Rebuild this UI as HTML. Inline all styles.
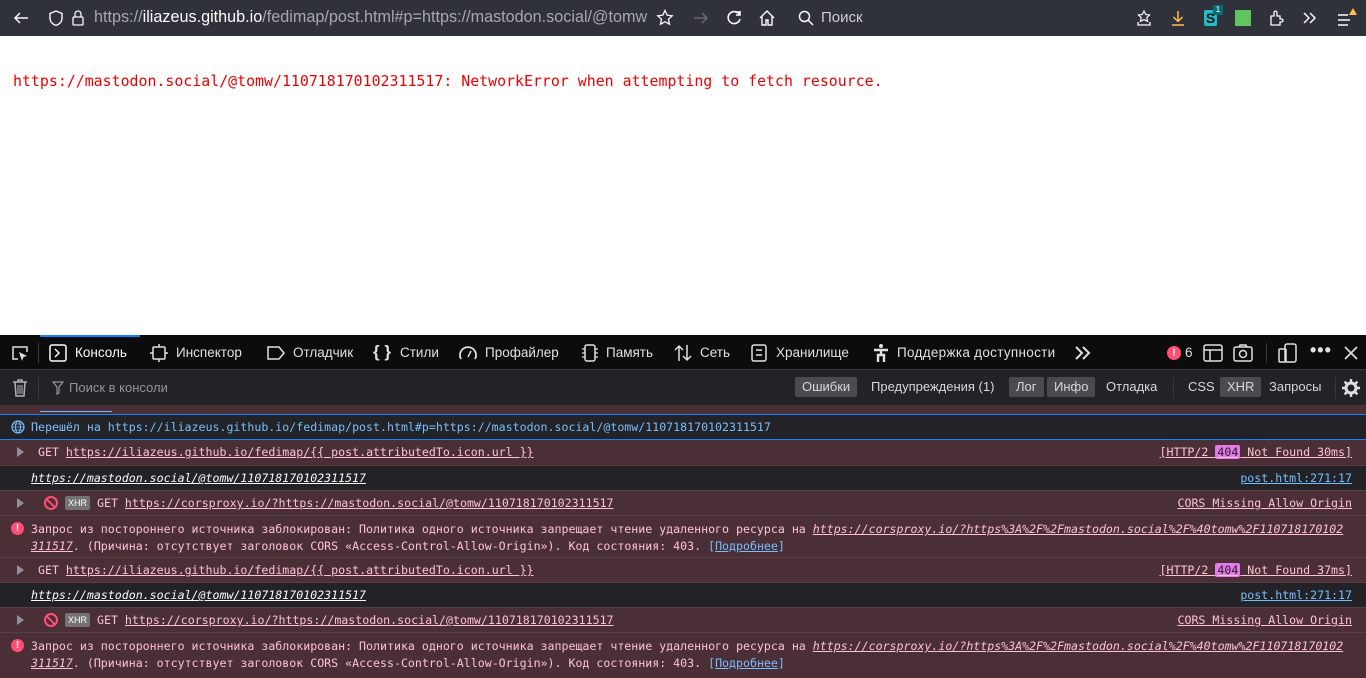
<!DOCTYPE html>
<html><head><meta charset="utf-8"><style>
*{box-sizing:border-box;margin:0;padding:0}
body{width:1366px;height:678px;overflow:hidden;background:#fff;font-family:"Liberation Sans","DejaVu Sans",sans-serif;position:relative}
.abs{position:absolute}
#top{left:0;top:0;width:1366px;height:36px;background:#2f323a;color:#fbfbfe}
#top .t{position:absolute;top:9px;font-size:15px;white-space:nowrap}
#page{left:0;top:36px;width:1366px;height:299px;background:#fff}
#err{left:13px;top:72px;font-family:"DejaVu Sans Mono","Liberation Mono",monospace;font-size:14.9px;color:#e00;white-space:nowrap}
#tabs{left:0;top:335px;width:1366px;height:35px;background:#0c0c0d;border-bottom:1px solid #38383d;color:#fbfbfe;font-size:13.5px}
#tabs .tb{position:absolute;top:10px;white-space:nowrap;color:#e0e0e2}
#filt{left:0;top:370px;width:1366px;height:35px;background:#232327;color:#b1b1b3;font-size:13px}
#filt .b{position:absolute;top:7px;height:20px;line-height:20px;padding:0 7px;border-radius:2px;white-space:nowrap;color:#d7d7db}
#filt .on{background:#4a4a4f}
#cons{left:0;top:405px;width:1366px;height:273px;background:#232327;font-family:"DejaVu Sans Mono","Liberation Mono",monospace;font-size:11.6px;color:#fbfbfe}
.row{position:absolute;left:0;width:1366px;white-space:nowrap}
.er{background:#4b2f36;border-top:1px solid #5c3d44;color:#ffc0d8}
.er a,.u{text-decoration:underline;color:#ffc0d8}
.tx{position:absolute;top:5px}
.r{position:absolute;right:14px;top:5px}
.tri{position:absolute;left:17px;top:7px;width:0;height:0;border-left:7px solid #8f8f9d;border-top:5px solid transparent;border-bottom:5px solid transparent}
.xhr{display:inline-block;background:#737373;color:#fff;font-family:"Liberation Sans",sans-serif;font-size:9px;padding:2px 3px;border-radius:2px;vertical-align:1px}
.blk{position:absolute;left:44px;top:5px;width:14px;height:14px;border:2px solid #ff4f74;border-radius:50%}
.blk:after{content:"";position:absolute;left:4px;top:-1px;width:2px;height:13px;background:#ff4f74;transform:rotate(-45deg)}
.ex{position:absolute;left:11px;top:6px;width:13px;height:13px;border-radius:50%;background:#ff4f74;color:#fff;font:bold 10px "Liberation Sans";text-align:center;line-height:13px}
.b404{background:#e17be8;color:#2a1a2a;padding:0 2px;border-radius:2px}
.blue{color:#75bfff}
</style></head><body>
<div id="top" class="abs">
<svg class="abs" style="left:12px;top:10px" width="18" height="16"><path d="M16 8H3M8 3L3 8l5 5" stroke="#fbfbfe" stroke-width="1.5" fill="none"/></svg>
<svg class="abs" style="left:48px;top:9px" width="16" height="18"><path d="M8 2L2 4.5V9c0 4 3 6.5 6 7.5 3-1 6-3.5 6-7.5V4.5z" stroke="#fbfbfe" stroke-width="1.4" fill="none"/></svg>
<svg class="abs" style="left:71px;top:9px" width="14" height="18"><rect x="2" y="8" width="10" height="8" rx="1" stroke="#fbfbfe" stroke-width="1.3" fill="none"/><path d="M4 8V5a3 3 0 0 1 6 0v3" stroke="#fbfbfe" stroke-width="1.3" fill="none"/></svg>
<div class="t" style="left:94px;color:#a8a8ad;font-size:16.2px;top:8px">https://<span style="color:#fbfbfe">iliazeus.github.io</span>/fedimap/post.html#p=https://mastodon.social/@tomw</div>
<svg class="abs" style="left:656px;top:9px" width="18" height="18"><path d="M9 1.5l2.2 4.7 5 .6-3.7 3.4 1 5L9 12.7 4.5 15.2l1-5L1.8 6.8l5-.6z" stroke="#fbfbfe" stroke-width="1.3" fill="none"/></svg>
<svg class="abs" style="left:692px;top:10px" width="18" height="16"><path d="M2 8h13M10 3l5 5-5 5" stroke="#6b6b70" stroke-width="1.5" fill="none"/></svg>
<svg class="abs" style="left:725px;top:9px" width="18" height="18"><path d="M14 5A6 6 0 1 0 15 10" stroke="#fbfbfe" stroke-width="1.6" fill="none"/><path d="M10 3h5v-1 4h-4" stroke="#fbfbfe" stroke-width="1.6" fill="none"/></svg>
<svg class="abs" style="left:758px;top:9px" width="18" height="18"><path d="M2 9L9 2l7 7M4 7v9h4v-5h2v5h4V7" stroke="#fbfbfe" stroke-width="1.4" fill="none"/></svg>
<svg class="abs" style="left:798px;top:10px" width="16" height="16"><circle cx="6.5" cy="6.5" r="5" stroke="#fbfbfe" stroke-width="1.5" fill="none"/><path d="M10 10l5 5" stroke="#fbfbfe" stroke-width="1.5"/></svg>
<div class="t" style="left:821px;color:#d0d0d4">Поиск</div>
<svg class="abs" style="left:1136px;top:9px" width="16" height="18"><path d="M8 2l1.8 3.5 3.7.5-2.7 2.6.7 3.7L8 10.6 4.5 12.3l.7-3.7L2.5 6l3.7-.5z" stroke="#fbfbfe" stroke-width="1.2" fill="none"/><path d="M2 13v3h12v-3" stroke="#fbfbfe" stroke-width="1.3" fill="none"/></svg>
<svg class="abs" style="left:1170px;top:9px" width="16" height="18"><path d="M8 2v10M3.5 8L8 12.5 12.5 8M2 16h12" stroke="#ffbd4f" stroke-width="1.5" fill="none"/></svg>
<div class="abs" style="left:1204px;top:10px;width:13px;height:16px;background:#1ec0c8;border-radius:2px;color:#0c0c0d;font:bold 14px/16px 'Liberation Sans';text-align:center">S</div>
<div class="abs" style="left:1213px;top:5px;width:10px;height:10px;background:#0b6d73;color:#fff;font:8px/10px 'Liberation Sans';text-align:center">1</div>
<div class="abs" style="left:1235px;top:10px;width:16px;height:16px;background:#5fc55f"></div>
<svg class="abs" style="left:1268px;top:9px" width="16" height="18"><path d="M3 16V7h3V3.5a1.5 1.5 0 0 1 3 0V7h3v3h1.5v0a1.5 1.5 0 0 1 0 3H12v3z" stroke="#fbfbfe" stroke-width="1.3" fill="none"/></svg>
<svg class="abs" style="left:1302px;top:11px" width="16" height="14"><path d="M2 2l5 5-5 5M8 2l5 5-5 5" stroke="#fbfbfe" stroke-width="1.5" fill="none"/></svg>
<svg class="abs" style="left:1336px;top:6px" width="24" height="22"><path d="M2 9h10M2 14h12M2 19h10" stroke="#fbfbfe" stroke-width="1.5"/><path d="M17 2l4 7h-8z" fill="#ffbd4f"/></svg>
</div>
<div id="page" class="abs"></div>
<div id="err" class="abs">https://mastodon.social/@tomw/110718170102311517: NetworkError when attempting to fetch resource.</div>

<div id="tabs" class="abs">
<div class="abs" style="left:40px;top:0;width:100px;height:2px;background:#0a84ff"></div>
<svg class="abs" style="left:10px;top:9px" width="20" height="18"><path d="M8 15H3V3h14v5" stroke="#e0e0e2" stroke-width="1.5" fill="none"/><path d="M9 8l8 4-3.5 1L12 17z" fill="#e0e0e2"/></svg>
<div class="abs" style="left:38px;top:8px;width:1px;height:20px;background:#38383d"></div>
<svg class="abs" style="left:49px;top:9px" width="18" height="18"><rect x="1" y="1" width="16" height="16" rx="2" stroke="#fbfbfe" stroke-width="1.5" fill="none"/><path d="M6 5l4 4-4 4" stroke="#fbfbfe" stroke-width="1.5" fill="none"/></svg>
<div class="tb" style="left:75px;color:#fbfbfe">Консоль</div>
<svg class="abs" style="left:150px;top:9px" width="18" height="18"><rect x="3" y="3" width="12" height="12" rx="1" stroke="#e0e0e2" stroke-width="1.5" fill="none"/><path d="M9 0v3M9 15v3M0 9h3M15 9h3" stroke="#e0e0e2" stroke-width="1.5"/></svg>
<div class="tb" style="left:176px">Инспектор</div>
<svg class="abs" style="left:266px;top:10px" width="20" height="16"><path d="M2 2h11l5 6-5 6H2z" stroke="#e0e0e2" stroke-width="1.5" fill="none"/></svg>
<div class="tb" style="left:293px">Отладчик</div>
<div class="tb" style="left:373px;top:7px;font-size:17px;font-weight:bold">{ }</div>
<div class="tb" style="left:400px">Стили</div>
<svg class="abs" style="left:458px;top:9px" width="20" height="18"><path d="M3 15A8 8 0 1 1 17 15" stroke="#e0e0e2" stroke-width="1.8" fill="none"/><path d="M10 13l3-6" stroke="#e0e0e2" stroke-width="1.5"/></svg>
<div class="tb" style="left:485px">Профайлер</div>
<svg class="abs" style="left:580px;top:9px" width="20" height="18"><rect x="5" y="1" width="10" height="16" rx="2" stroke="#e0e0e2" stroke-width="1.5" fill="none"/><path d="M2 5h3M2 9h3M2 13h3M15 5h3M15 9h3M15 13h3" stroke="#e0e0e2" stroke-width="1.2"/></svg>
<div class="tb" style="left:606px">Память</div>
<svg class="abs" style="left:673px;top:9px" width="20" height="18"><path d="M6 17V2M2 6l4-4 4 4M14 1v15M10 12l4 4 4-4" stroke="#e0e0e2" stroke-width="1.5" fill="none"/></svg>
<div class="tb" style="left:700px">Сеть</div>
<svg class="abs" style="left:750px;top:9px" width="18" height="18"><rect x="2" y="1" width="14" height="16" rx="2" stroke="#e0e0e2" stroke-width="1.5" fill="none"/><path d="M6 6h6M6 11h6" stroke="#e0e0e2" stroke-width="1.5"/></svg>
<div class="tb" style="left:776px">Хранилище</div>
<svg class="abs" style="left:872px;top:8px" width="18" height="20"><circle cx="9" cy="3" r="2" fill="#e0e0e2"/><path d="M2 7h14M9 6v6M6 19v-7h6v7" stroke="#e0e0e2" stroke-width="2.4" fill="none"/></svg>
<div class="tb" style="left:897px;letter-spacing:0.3px">Поддержка доступности</div>
<svg class="abs" style="left:1074px;top:11px" width="18" height="14"><path d="M2 1l6 6-6 6M9 1l6 6-6 6" stroke="#e0e0e2" stroke-width="2" fill="none"/></svg>
<div class="abs" style="left:1167px;top:11px;width:14px;height:14px;border-radius:50%;background:#ff4f74;color:#fff;font:bold 11px/14px 'Liberation Sans';text-align:center">!</div>
<div class="tb" style="left:1185px">6</div>
<svg class="abs" style="left:1203px;top:9px" width="20" height="18"><rect x="1" y="1" width="18" height="16" rx="2" stroke="#e0e0e2" stroke-width="1.5" fill="none"/><path d="M1 6h18M7 6v11" stroke="#e0e0e2" stroke-width="1.5"/></svg>
<svg class="abs" style="left:1233px;top:9px" width="20" height="18"><rect x="1" y="3" width="18" height="14" rx="2" stroke="#e0e0e2" stroke-width="1.5" fill="none"/><circle cx="10" cy="10" r="3.5" stroke="#e0e0e2" stroke-width="1.5" fill="none"/><path d="M6 3l1-2h6l1 2" stroke="#e0e0e2" stroke-width="1.5" fill="none"/></svg>
<div class="abs" style="left:1266px;top:8px;width:1px;height:20px;background:#38383d"></div>
<svg class="abs" style="left:1278px;top:8px" width="20" height="20"><rect x="7" y="1" width="11" height="18" rx="2" stroke="#e0e0e2" stroke-width="1.5" fill="none"/><rect x="1" y="6" width="7" height="13" rx="1" stroke="#e0e0e2" stroke-width="1.5" fill="none"/></svg>
<div class="tb" style="left:1310px;top:5px;font-size:18px;font-weight:bold;letter-spacing:1px">•••</div>
<svg class="abs" style="left:1343px;top:10px" width="16" height="16"><path d="M2 2l12 12M14 2L2 14" stroke="#e0e0e2" stroke-width="1.6"/></svg>
</div>

<div id="filt" class="abs">
<svg class="abs" style="left:11px;top:8px" width="18" height="20"><path d="M2 4h14M7 4V2h4v2M4 4l1 14h8l1-14" stroke="#b1b1b3" stroke-width="1.5" fill="none"/><path d="M7 7v9M9 7v9M11 7v9" stroke="#b1b1b3"/></svg>
<div class="abs" style="left:38px;top:7px;width:1px;height:22px;background:#38383d"></div>
<svg class="abs" style="left:52px;top:11px" width="12" height="14"><path d="M1 1h10L7 6v6L5 13V6z" stroke="#939395" stroke-width="1.2" fill="none"/></svg>
<div class="abs" style="left:69px;top:10px;color:#939395">Поиск в консоли</div>
<div class="b on" style="left:795px">Ошибки</div>
<div class="b" style="left:864px">Предупреждения (1)</div>
<div class="b on" style="left:1009px">Лог</div>
<div class="b on" style="left:1047px">Инфо</div>
<div class="b" style="left:1099px">Отладка</div>
<div class="abs" style="left:1173px;top:7px;width:1px;height:22px;background:#38383d"></div>
<div class="b" style="left:1181px">CSS</div>
<div class="b on" style="left:1220px">XHR</div>
<div class="b" style="left:1262px">Запросы</div>
<div class="abs" style="left:1335px;top:7px;width:1px;height:22px;background:#38383d"></div>
<svg class="abs" style="left:1341px;top:8px" width="20" height="20"><circle cx="10" cy="10" r="5" stroke="#e0e0e2" stroke-width="3" fill="none"/><path d="M10 1v4M10 15v4M1 10h4M15 10h4M3.6 3.6l2.8 2.8M13.6 13.6l2.8 2.8M3.6 16.4l2.8-2.8M13.6 6.4l2.8-2.8" stroke="#e0e0e2" stroke-width="2.4"/></svg>
</div>

<div id="cons" class="abs">
<div class="row er" style="top:0;height:9px;border-top:none"><div class="abs" style="left:40px;top:6px;width:72px;height:1px;background:#75bfff"></div></div>
<div class="row" style="top:9px;height:26px;border-top:1px solid #0a84ff;border-bottom:1px solid #0a84ff;background:#232327;color:#75bfff">
<svg class="abs" style="left:11px;top:5px" width="14" height="14"><circle cx="7" cy="7" r="6" stroke="#75bfff" stroke-width="1.2" fill="none"/><ellipse cx="7" cy="7" rx="2.5" ry="6" stroke="#75bfff" fill="none"/><path d="M1 7h12M2 4h10M2 10h10" stroke="#75bfff" stroke-width=".8"/></svg>
<span class="tx" style="left:31px">Перешёл на https://iliazeus.github.io/fedimap/post.html#p=https://mastodon.social/@tomw/110718170102311517</span></div>

<div class="row er" style="top:35px;height:25px;border-top:none"><div class="tri"></div><span class="tx" style="left:38px">GET <a>https://iliazeus.github.io/fedimap/{{ post.attributedTo.icon.url }}</a></span><span class="r u">[HTTP/2 <span class="b404">404</span> Not Found 30ms]</span></div>
<div class="row" style="top:60px;height:25px;border-top:1px solid #5c3d44;background:#232327"><span class="tx u" style="left:31px;color:#fbfbfe;font-style:italic">https://mastodon.social/@tomw/110718170102311517</span><span class="r blue" style="text-decoration:underline">post.html:271:17</span></div>
<div class="row er" style="top:85px;height:25px"><div class="tri"></div><div class="blk"></div><span class="tx" style="left:65px"><span class="xhr">XHR</span> GET <a>https://corsproxy.io/?https://mastodon.social/@tomw/110718170102311517</a></span><span class="r u">CORS Missing Allow Origin</span></div>
<div class="row er" style="top:110px;height:42px"><div class="ex">!</div><span class="tx" style="left:31px;line-height:17px">Запрос из постороннего источника заблокирован: Политика одного источника запрещает чтение удаленного ресурса на <a style="font-style:italic">https://corsproxy.io/?https%3A%2F%2Fmastodon.social%2F%40tomw%2F110718170102</a><br><a style="font-style:italic">311517</a>. (Причина: отсутствует заголовок CORS «Access-Control-Allow-Origin»). Код состояния: 403. <span class="blue">[<u>Подробнее</u>]</span></span></div>

<div class="row er" style="top:152px;height:25px"><div class="tri"></div><span class="tx" style="left:38px">GET <a>https://iliazeus.github.io/fedimap/{{ post.attributedTo.icon.url }}</a></span><span class="r u">[HTTP/2 <span class="b404">404</span> Not Found 37ms]</span></div>
<div class="row" style="top:177px;height:25px;border-top:1px solid #5c3d44;background:#232327"><span class="tx u" style="left:31px;color:#fbfbfe;font-style:italic">https://mastodon.social/@tomw/110718170102311517</span><span class="r blue" style="text-decoration:underline">post.html:271:17</span></div>
<div class="row er" style="top:202px;height:25px"><div class="tri"></div><div class="blk"></div><span class="tx" style="left:65px"><span class="xhr">XHR</span> GET <a>https://corsproxy.io/?https://mastodon.social/@tomw/110718170102311517</a></span><span class="r u">CORS Missing Allow Origin</span></div>
<div class="row er" style="top:227px;height:46px"><div class="ex">!</div><span class="tx" style="left:31px;line-height:17px">Запрос из постороннего источника заблокирован: Политика одного источника запрещает чтение удаленного ресурса на <a style="font-style:italic">https://corsproxy.io/?https%3A%2F%2Fmastodon.social%2F%40tomw%2F110718170102</a><br><a style="font-style:italic">311517</a>. (Причина: отсутствует заголовок CORS «Access-Control-Allow-Origin»). Код состояния: 403. <span class="blue">[<u>Подробнее</u>]</span></span></div>
</div>
</body></html>
